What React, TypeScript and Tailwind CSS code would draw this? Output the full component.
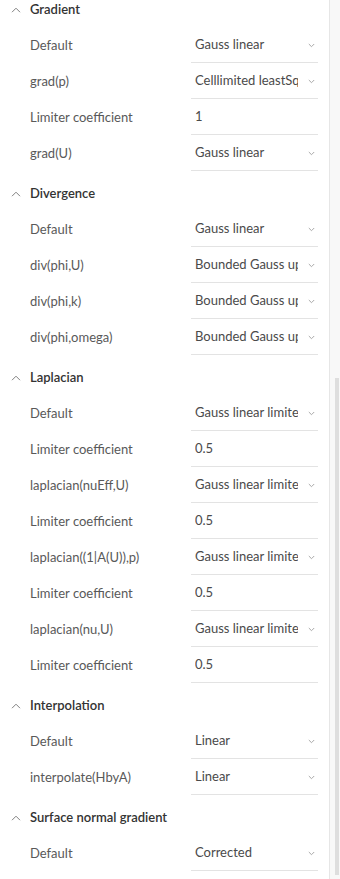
import React from "react";

type Row = { label: string; value: string; select: boolean };
type Section = { title: string; rows: Row[] };

const S = (label: string, value: string): Row => ({ label, value, select: true });
const I = (label: string, value: string): Row => ({ label, value, select: false });

const sections: Section[] = [
  {
    title: "Gradient",
    rows: [
      S("Default", "Gauss linear"),
      S("grad(p)", "Celllimited leastSquares"),
      I("Limiter coefficient", "1"),
      S("grad(U)", "Gauss linear"),
    ],
  },
  {
    title: "Divergence",
    rows: [
      S("Default", "Gauss linear"),
      S("div(phi,U)", "Bounded Gauss upwind"),
      S("div(phi,k)", "Bounded Gauss upwind"),
      S("div(phi,omega)", "Bounded Gauss upwind"),
    ],
  },
  {
    title: "Laplacian",
    rows: [
      S("Default", "Gauss linear limited"),
      I("Limiter coefficient", "0.5"),
      S("laplacian(nuEff,U)", "Gauss linear limited"),
      I("Limiter coefficient", "0.5"),
      S("laplacian((1|A(U)),p)", "Gauss linear limited"),
      I("Limiter coefficient", "0.5"),
      S("laplacian(nu,U)", "Gauss linear limited"),
      I("Limiter coefficient", "0.5"),
    ],
  },
  {
    title: "Interpolation",
    rows: [S("Default", "Linear"), S("interpolate(HbyA)", "Linear")],
  },
  {
    title: "Surface normal gradient",
    rows: [S("Default", "Corrected")],
  },
];

function ChevronUp() {
  return (
    <svg width="10" height="6" viewBox="0 0 10 6" className="shrink-0">
      <path d="M1 5.2 L5 1.2 L9 5.2" fill="none" stroke="#808080" strokeWidth="1" />
    </svg>
  );
}

function ChevronDown() {
  return (
    <svg width="7" height="5" viewBox="0 0 7 5" className="shrink-0">
      <path d="M0.8 1 L3.5 3.7 L6.2 1" fill="none" stroke="#a8a8a8" strokeWidth="1" />
    </svg>
  );
}

export default function App() {
  return (
    <div
      className="flex h-[879px] w-[340px] overflow-hidden bg-white"
      style={{ fontFamily: "Lato, 'Noto Sans', sans-serif" }}
    >
      <div className="w-[330px] shrink-0 border-r border-[#e6e6e6]">
        <div className="-mt-[8px]">
          {sections.map((sec) => (
            <div key={sec.title} className="pb-1">
              <div className="flex h-9 items-center">
                <div className="flex w-[30px] justify-center pl-[1px]">
                  <ChevronUp />
                </div>
                <span className="text-[13px] font-semibold text-[#333]">{sec.title}</span>
              </div>
              {sec.rows.map((r, i) => (
                <div key={i} className="flex h-9 items-center">
                  <div className="w-[191px] shrink-0 pl-[30px] text-[13px] text-[#595959]">
                    {r.label}
                  </div>
                  <div className="flex h-[34px] w-[127px] items-center border-b border-[#e3e3e3] pl-[4px] pr-[2px]">
                    <div className="flex-1 overflow-hidden whitespace-nowrap pb-[2px] text-[13px] text-[#4a4a4a]">
                      {r.value}
                    </div>
                    {r.select && (
                      <div className="ml-[8px] flex w-[10px] justify-center">
                        <ChevronDown />
                      </div>
                    )}
                  </div>
                </div>
              ))}
            </div>
          ))}
        </div>
      </div>
      <div className="flex w-[10px] flex-col bg-[#f8f8f8] pt-[378px]">
        <div className="ml-[5px] h-[497px] w-[4px] bg-[#dedede]" />
      </div>
    </div>
  );
}
